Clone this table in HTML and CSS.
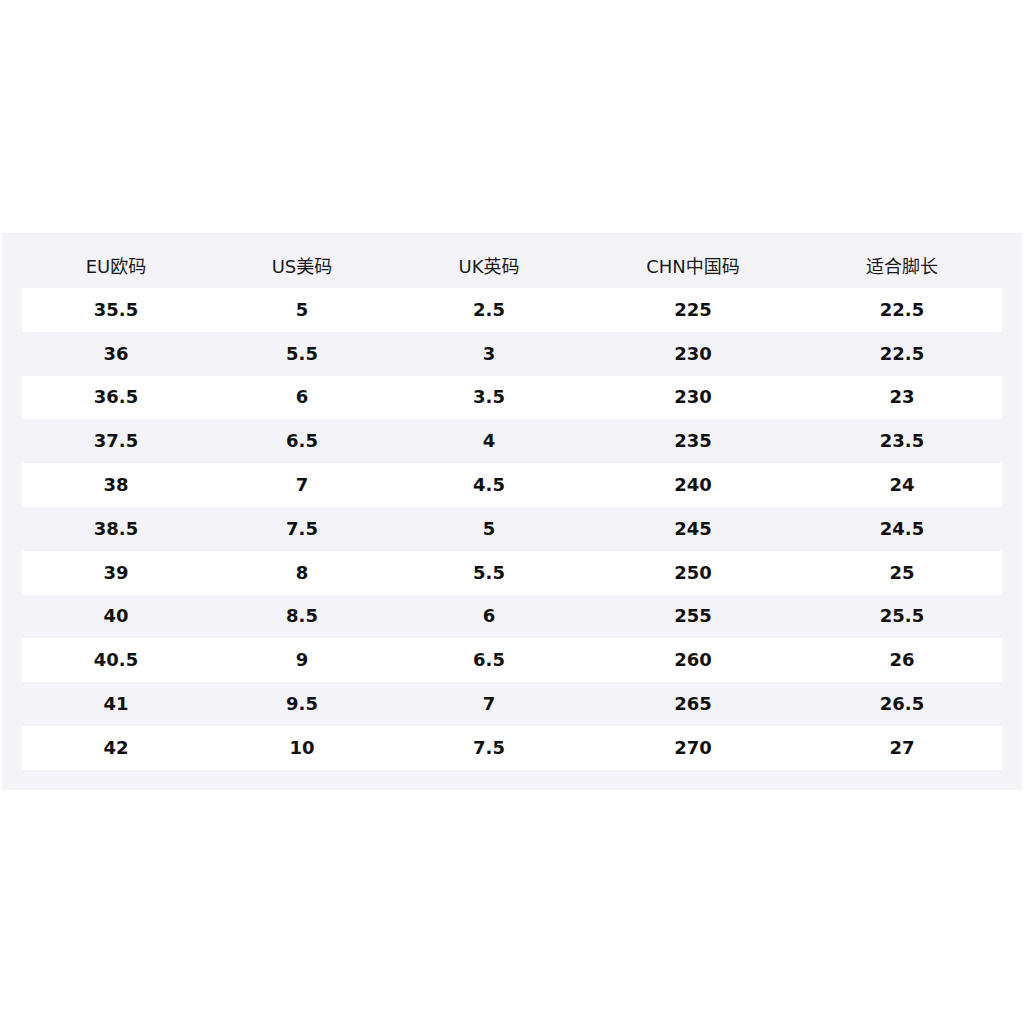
FILE: index.html
```html
<!DOCTYPE html>
<html lang="zh">
<head>
<meta charset="utf-8">
<title>尺码表</title>
<link rel="stylesheet" href="styles.css">
</head>
<body>
<div class="page">
  <div class="panel">
    <div class="row head">
      <div>EU欧码</div><div>US美码</div><div>UK英码</div><div>CHN中国码</div><div>适合脚长</div>
    </div>
    <div class="row odd"><div>35.5</div><div>5</div><div>2.5</div><div>225</div><div>22.5</div></div>
    <div class="row"><div>36</div><div>5.5</div><div>3</div><div>230</div><div>22.5</div></div>
    <div class="row odd"><div>36.5</div><div>6</div><div>3.5</div><div>230</div><div>23</div></div>
    <div class="row"><div>37.5</div><div>6.5</div><div>4</div><div>235</div><div>23.5</div></div>
    <div class="row odd"><div>38</div><div>7</div><div>4.5</div><div>240</div><div>24</div></div>
    <div class="row"><div>38.5</div><div>7.5</div><div>5</div><div>245</div><div>24.5</div></div>
    <div class="row odd"><div>39</div><div>8</div><div>5.5</div><div>250</div><div>25</div></div>
    <div class="row"><div>40</div><div>8.5</div><div>6</div><div>255</div><div>25.5</div></div>
    <div class="row odd"><div>40.5</div><div>9</div><div>6.5</div><div>260</div><div>26</div></div>
    <div class="row"><div>41</div><div>9.5</div><div>7</div><div>265</div><div>26.5</div></div>
    <div class="row odd"><div>42</div><div>10</div><div>7.5</div><div>270</div><div>27</div></div>
  </div>
</div>
</body>
</html>
```
FILE: styles.css
```css
html, body {
  margin: 0;
  padding: 0;
  background: #ffffff;
}
.page {
  padding: 233px 2px 0 2px;
}
.panel {
  width: 980px;
  padding: 0 20px 20px 20px;
  background: #f4f4f8;
  font-family: "DejaVu Sans", "Noto Sans CJK SC", sans-serif;
  color: #111111;
}
.row {
  display: grid;
  grid-template-columns: 188px 184px 190px 218px 200px;
  align-items: center;
  height: 43.8px;
  font-size: 18px;
  font-weight: bold;
  line-height: 22px;
  text-align: center;
}
.row.odd {
  background: #ffffff;
}
.row.head {
  height: 22px;
  padding: 23px 0 10px 0;
  font-weight: normal;
  color: #1a1a1a;
}
```
